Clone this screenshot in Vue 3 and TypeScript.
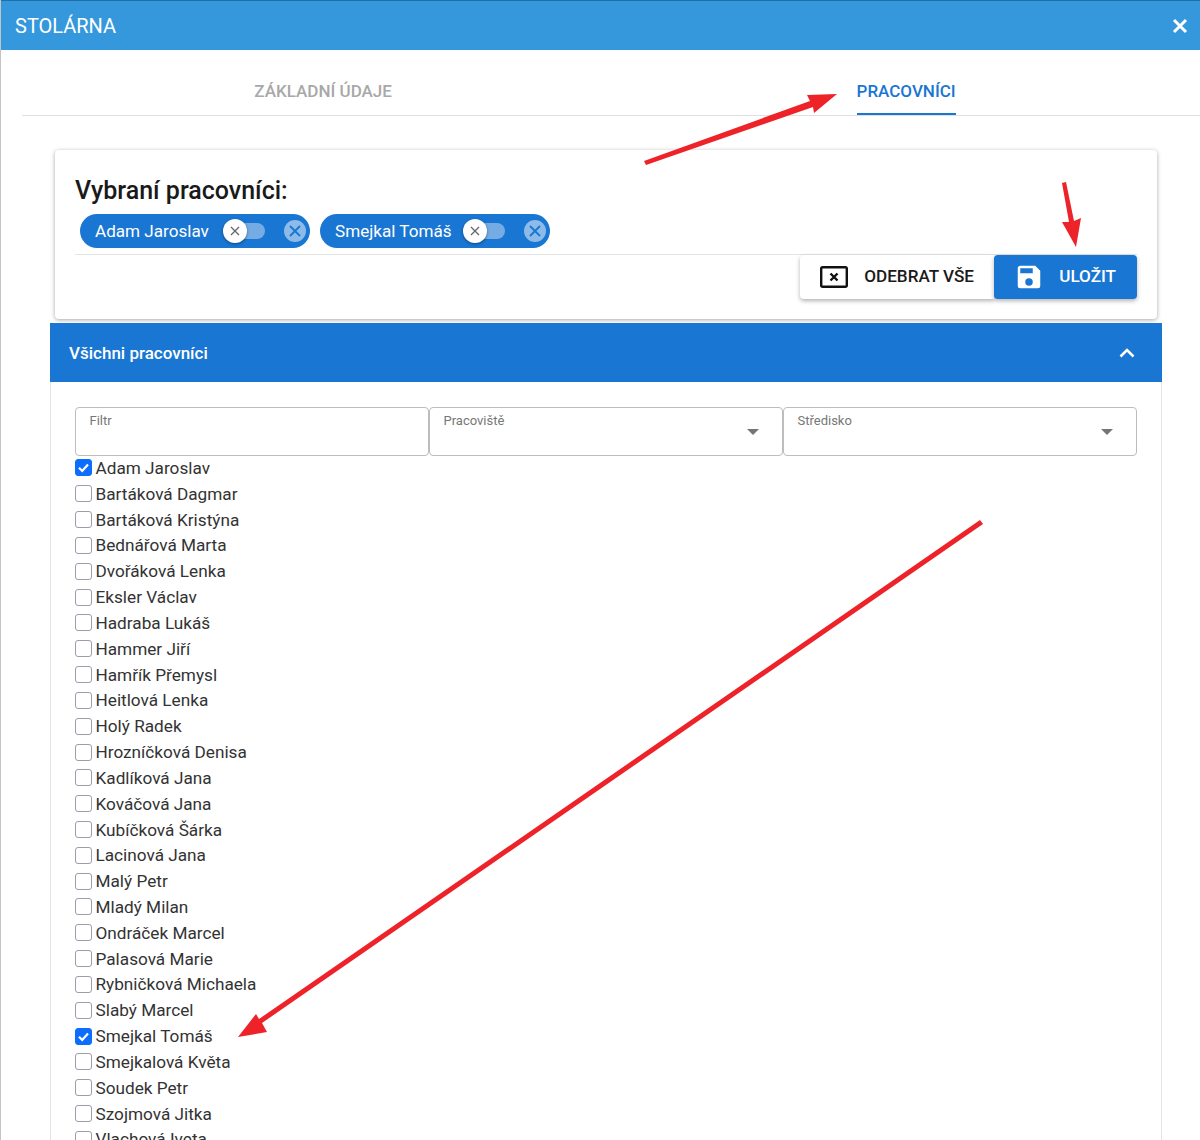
<script setup lang="ts">
const selected = ['Adam Jaroslav', 'Smejkal Tomáš']

const workers = [
  'Adam Jaroslav', 'Bartáková Dagmar', 'Bartáková Kristýna', 'Bednářová Marta', 'Dvořáková Lenka',
  'Eksler Václav', 'Hadraba Lukáš', 'Hammer Jiří', 'Hamřík Přemysl', 'Heitlová Lenka', 'Holý Radek',
  'Hrozníčková Denisa', 'Kadlíková Jana', 'Kováčová Jana', 'Kubíčková Šárka', 'Lacinová Jana',
  'Malý Petr', 'Mladý Milan', 'Ondráček Marcel', 'Palasová Marie', 'Rybničková Michaela',
  'Slabý Marcel', 'Smejkal Tomáš', 'Smejkalová Květa', 'Soudek Petr', 'Szojmová Jitka', 'Vlachová Iveta',
]

const fields = [
  { label: 'Filtr', select: false },
  { label: 'Pracoviště', select: true },
  { label: 'Středisko', select: true },
]
</script>

<template>
  <div class="dialog">
    <header class="dialog__head">
      <span class="dialog__title">STOLÁRNA</span>
      <svg class="dialog__close" width="16" height="16" viewBox="0 0 16 16">
        <path d="M2 2L14 14M14 2L2 14" stroke="#fff" stroke-width="3" />
      </svg>
    </header>

    <nav class="tabs">
      <span class="tabs__tab">ZÁKLADNÍ ÚDAJE</span>
      <span class="tabs__tab tabs__tab--active">PRACOVNÍCI</span>
    </nav>

    <section class="card">
      <h2 class="card__title">Vybraní pracovníci:</h2>
      <div class="chips">
        <div v-for="name in selected" :key="name" class="chip">
          <span class="chip__text">{{ name }}</span>
          <span class="switch">
            <span class="switch__thumb">
              <svg width="10" height="10" viewBox="0 0 10 10">
                <path d="M1 1L9 9M9 1L1 9" stroke="#666" stroke-width="1.3" />
              </svg>
            </span>
          </span>
          <span class="chip__remove">
            <svg width="12" height="12" viewBox="0 0 12 12">
              <path d="M1 1L11 11M11 1L1 11" stroke="#1976d2" stroke-width="1.8" />
            </svg>
          </span>
        </div>
      </div>
      <div class="card__actions">
        <button class="btn">
          <svg width="28" height="22" viewBox="0 0 28 22">
            <rect x="1.2" y="1.2" width="25.6" height="19.6" rx="1.5" fill="none" stroke="#111" stroke-width="2.4" />
            <path d="M10.5 7.5L17.5 14.5M17.5 7.5L10.5 14.5" stroke="#111" stroke-width="2.4" />
          </svg>
          <span class="btn__label">ODEBRAT VŠE</span>
        </button>
        <button class="btn btn--primary">
          <svg width="30" height="30" viewBox="0 0 24 24">
            <path fill="#fff" d="M15,9H5V5H15M12,19A3,3 0 0,1 9,16A3,3 0 0,1 12,13A3,3 0 0,1 15,16A3,3 0 0,1 12,19M17,3H5C3.89,3 3,3.9 3,5V19A2,2 0 0,0 5,21H19A2,2 0 0,0 21,19V7L17,3Z" />
          </svg>
          <span class="btn__label">ULOŽIT</span>
        </button>
      </div>
    </section>

    <section class="panel">
      <div class="panel__head">
        <span>Všichni pracovníci</span>
        <svg width="16" height="10" viewBox="0 0 16 10">
          <path d="M1.5 8.5L8 2L14.5 8.5" fill="none" stroke="#fff" stroke-width="2.6" />
        </svg>
      </div>
      <div class="panel__body">
        <div class="filters">
          <div v-for="f in fields" :key="f.label" class="field">
            <span class="field__label">{{ f.label }}</span>
            <span v-if="f.select" class="field__caret"></span>
          </div>
        </div>
        <ul class="list">
          <li v-for="w in workers" :key="w" class="list__item">
            <span class="check" :class="{ 'check--on': selected.includes(w) }">
              <svg v-if="selected.includes(w)" width="13" height="13" viewBox="0 0 13 13">
                <path d="M2 6.8L5.2 10L11 3.4" fill="none" stroke="#fff" stroke-width="2.2" />
              </svg>
            </span>
            <span>{{ w }}</span>
          </li>
        </ul>
      </div>
    </section>

    <!-- red annotation arrows lying over the screenshot -->
    <svg class="arrows" width="1200" height="1140" viewBox="0 0 1200 1140">
      <g fill="#ee2229" stroke="none">
        <path d="M644 161L810 101L807 95L837 94L814 113L813 107L646 165Z" />
        <path d="M1062 183L1066 182L1074 221L1081 218L1076 247L1062 222L1069 222Z" />
        <path d="M980 520L983 524L262 1023L267 1032L238 1037L256 1014L259 1019Z" />
      </g>
    </svg>
  </div>
</template>

<style>
html, body { margin: 0; background: #fff; }
</style>

<style scoped>
.dialog {
  position: relative;
  width: 1200px;
  height: 1140px;
  overflow: hidden;
  box-sizing: border-box;
  border-left: 1px solid #c4c4c4;
  font-family: Roboto, "Liberation Sans", sans-serif;
  color: #222;
}
.dialog__head {
  height: 50px;
  margin-left: -1px;
  padding: 0 12px 0 15px;
  box-sizing: border-box;
  border-top: 1px solid #1f6ea8;
  background: #3598dc;
  color: #fff;
  display: flex;
  align-items: center;
  justify-content: space-between;
}
.dialog__title { font-size: 20px; }

.tabs {
  margin: 20px 0 0 21px;
  height: 45px;
  padding-right: 12px;
  border-bottom: 1px solid #e0e0e0;
  display: flex;
  justify-content: space-around;
}
.tabs__tab {
  height: 44px;
  line-height: 43px;
  font-size: 17px;
  font-weight: 500;
  color: #a8a8a8;
}
.tabs__tab--active {
  color: #1976d2;
  height: 45px;
  box-sizing: border-box;
  border-bottom: 2px solid #1976d2;
}

.card {
  margin: 34px 0 0 54px;
  width: 1102px;
  height: 169px;
  box-sizing: border-box;
  padding: 27px 20px 0;
  border-radius: 4px;
  background: #fff;
  box-shadow: 0 1px 4px rgba(0, 0, 0, .35);
}
.card__title {
  margin: 0;
  font-size: 25px;
  line-height: 27px;
  font-weight: 500;
  color: #1a1a1a;
}
.chips {
  margin-top: 10px;
  height: 40px;
  padding-left: 5px;
  border-bottom: 1px solid #e4e4e4;
  display: flex;
  gap: 10px;
}
.chip {
  width: 230px;
  height: 34px;
  box-sizing: border-box;
  padding: 0 4px 0 15px;
  border-radius: 17px;
  background: #1976d2;
  color: #fff;
  font-size: 17.1px;
  display: flex;
  align-items: center;
}
.chip__text { width: 128px; white-space: nowrap; }
.switch {
  position: relative;
  width: 42px;
  height: 16px;
  display: block;
}
.switch::before {
  content: "";
  position: absolute;
  left: 10px;
  right: 0;
  top: 0;
  bottom: 0;
  border-radius: 8px;
  background: rgba(255, 255, 255, .4);
}
.switch__thumb {
  position: absolute;
  left: 0;
  top: -4px;
  width: 24px;
  height: 24px;
  border-radius: 50%;
  background: #fff;
  box-shadow: 0 1px 3px rgba(0, 0, 0, .4);
  display: flex;
  align-items: center;
  justify-content: center;
}
.chip__remove {
  margin-left: auto;
  width: 22px;
  height: 22px;
  border-radius: 50%;
  background: rgba(255, 255, 255, .5);
  display: flex;
  align-items: center;
  justify-content: center;
}

.card__actions {
  display: flex;
  justify-content: flex-end;
}
.btn {
  width: 194px;
  height: 44px;
  padding: 0 20px;
  border: 0;
  border-radius: 4px 0 0 4px;
  background: #fff;
  color: #1a1a1a;
  font: 500 17.1px Roboto, "Liberation Sans", sans-serif;
  box-shadow: 0 2px 4px rgba(0, 0, 0, .3);
  display: flex;
  align-items: center;
  justify-content: space-between;
}
.btn__label { margin-bottom: 3px; }
.btn--primary {
  position: relative;
  width: 143px;
  padding: 0 21px 0 20px;
  border-radius: 4px;
  background: #1976d2;
  color: #fff;
}

.panel {
  margin: 4px 0 0 49px;
  width: 1112px;
  box-sizing: border-box;
  border-right: 1px solid #e4e4e4;
  border-left: 1px solid #e4e4e4;
}
.panel__head {
  height: 59px;
  margin: 0 -1px;
  padding: 1px 27px 0 19px;
  box-sizing: border-box;
  background: #1976d2;
  color: #fff;
  font-size: 17px;
  font-weight: 500;
  display: flex;
  align-items: center;
  justify-content: space-between;
}
.panel__body { padding: 25px 24px 0; }
.filters {
  display: grid;
  grid-template-columns: repeat(3, 1fr);
}
.field {
  position: relative;
  height: 49px;
  box-sizing: border-box;
  padding: 5px 13.5px;
  border: 1px solid #bdbdbd;
  border-radius: 4px;
}
.field__label {
  font-size: 13px;
  line-height: 16px;
  color: #777;
  display: block;
}
.field__caret {
  position: absolute;
  right: 23px;
  top: 21px;
  border-top: 6px solid #757575;
  border-left: 6px solid transparent;
  border-right: 6px solid transparent;
}
.list {
  margin: 0;
  padding: 0;
  list-style: none;
}
.list__item {
  height: 25.83px;
  box-sizing: border-box;
  padding-bottom: 2px;
  font-size: 17.2px;
  color: #333;
  display: flex;
  align-items: center;
  gap: 3.5px;
}
.check {
  width: 17px;
  height: 17px;
  box-sizing: border-box;
  border: 1.5px solid #9c9cac;
  border-radius: 3px;
  background: #fff;
  display: flex;
  align-items: center;
  justify-content: center;
  flex: none;
}
.check--on {
  border-color: #0d6efd;
  background: #0d6efd;
}

.arrows {
  position: absolute;
  left: -1px;
  top: 0;
  pointer-events: none;
}
</style>
